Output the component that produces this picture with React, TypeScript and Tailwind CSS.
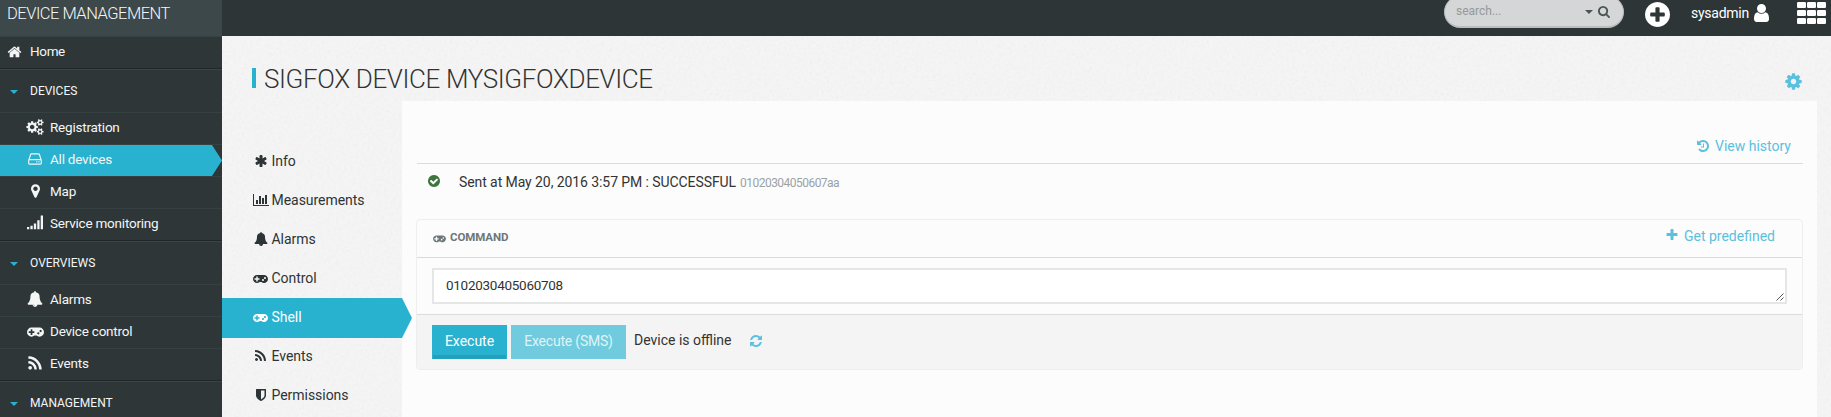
import type { ReactNode } from 'react';

const CIRCLE = 'M1664 896q0 209-103 385.5t-279.5 279.5-385.5 103-385.5-103-279.5-279.5-103-385.5 103-385.5 279.5-279.5 385.5-103 385.5 103 279.5 279.5 103 385.5z';
const TOOTHED = 'v140q0 16-149 31-12 27-30 52 51 113 51 138 0 4-4 7-122 71-124 71-8 0-46-47t-52-68q-20 2-30 2t-30-2q-14 21-52 68t-46 47q-2 0-124-71-4-3-4-7 0-25 51-138-18-25-30-52-149-15-149-31v-140q0-16 149-31 13-29 30-52-51-113-51-138 0-4 4-7 4-2 35-20t59-34 30-16q8 0 46 46.5t52 67.5q20-2 30-2t30 2q51-71 92-112l6-2q4 0 124 70 4 3 4 7 0 25-51 138 17 23 30 52 149 15 149 31z';

const icons = {
  home: ['0 0 1792 1792', 'M1472 992v480q0 26-19 45t-45 19h-384v-384h-256v384h-384q-26 0-45-19t-19-45v-480q0-1 .5-3t.5-3l575-474 575 474q1 2 1 6zm223-69l-62 74q-8 9-21 11h-3q-13 0-21-7l-692-577-692 577q-12 8-24 7-13-2-21-11l-62-74q-8-10-7-23.5t11-21.5l719-599q32-26 76-26t76 26l244 204v-195q0-14 9-23t23-9h192q14 0 23 9t9 23v408l219 182q10 8 11 21.5t-7 23.5z'],
  cogs: ['-64 0 1920 1792', 'M832 896q0-106-75-181t-181-75-181 75-75 181 75 181 181 75 181-75 75-181zm768 512q0-52-38-90t-90-38-90 38-38 90q0 53 37.5 90.5t90.5 37.5 90.5-37.5 37.5-90.5zm0-1024q0-52-38-90t-90-38-90 38-38 90q0 53 37.5 90.5t90.5 37.5 90.5-37.5 37.5-90.5zm-384 421v185q0 10-7 19.5t-16 10.5l-155 24q-11 35-32 76 34 48 90 115 7 11 7 20 0 12-7 19-23 30-82.5 89.5t-78.5 59.5q-11 0-21-7l-115-90q-37 19-77 31-11 108-23 155-7 24-30 24h-186q-11 0-20-7.5t-10-17.5l-23-153q-34-10-75-31l-118 89q-7 7-20 7-11 0-21-8-144-133-144-160 0-9 7-19 10-14 41-53t47-61q-23-44-35-82l-152-24q-10-1-17-9.5t-7-19.5v-185q0-10 7-19.5t16-10.5l155-24q11-35 32-76-34-48-90-115-7-11-7-20 0-12 7-20 22-30 82-89t79-59q11 0 21 7l115 90q34-18 77-32 11-108 23-154 7-24 30-24h186q11 0 20 7.5t10 17.5l23 153q34 10 75 31l118-89q8-7 20-7 11 0 21 8 144 133 144 160 0 8-7 19-12 16-42 54t-45 60q23 48 34 82l152 23q10 2 17 10.5t7 19.5zM1856 1338' + TOOTHED + 'M1856 314' + TOOTHED],
  hdd: ['128 0 1536 1792', 'M1168 1216q0 33-23.5 56.5t-56.5 23.5-56.5-23.5-23.5-56.5 23.5-56.5 56.5-23.5 56.5 23.5 23.5 56.5zm256 0q0 33-23.5 56.5t-56.5 23.5-56.5-23.5-23.5-56.5 23.5-56.5 56.5-23.5 56.5 23.5 23.5 56.5zm112 160v-320q0-13-9.5-22.5t-22.5-9.5h-1216q-13 0-22.5 9.5t-9.5 22.5v320q0 13 9.5 22.5t22.5 9.5h1216q13 0 22.5-9.5t9.5-22.5zm-1230-480h1180l-157-482q-4-13-16-21.5t-26-8.5h-782q-14 0-26 8.5t-16 21.5zm1358 160v320q0 66-47 113t-113 47h-1216q-66 0-113-47t-47-113v-320q0-25 16-75l197-606q17-53 63-86t101-33h782q55 0 101 33t63 86l197 606q16 50 16 75z'],
  marker: ['384 0 1024 1792', 'M1152 640q0-106-75-181t-181-75-181 75-75 181 75 181 181 75 181-75 75-181zm256 0q0 109-33 179l-364 774q-16 33-47.5 52t-67.5 19-67.5-19-46.5-52l-365-774q-33-70-33-179 0-212 150-362t362-150 362 150 150 362z'],
  signal: ['0 0 1792 1792', 'M0 1344h256v256h-256zM384 1216h256v384h-256zM768 960h256v640h-256zM1152 576h256v1024h-256zM1536 64h256v1536h-256z'],
  bell: ['0 0 1792 1792', 'M912 1696q0-16-16-16-59 0-101.5-42.5t-42.5-101.5q0-16-16-16t-16 16q0 73 51.5 124.5t124.5 51.5q16 0 16-16zm816-288q0 52-38 90t-90 38h-448q0 106-75 181t-181 75-181-75-75-181h-448q-52 0-90-38t-38-90q50-42 91-88t85-119.5 74.5-158.5 50-206 19.5-260q0-152 117-282.5t307-158.5q-8-19-8-39 0-40 28-68t68-28 68 28 28 68q0 20-8 39 190 28 307 158.5t117 282.5q0 139 19.5 260t50 206 74.5 158.5 85 119.5 91 88z'],
  gamepad: ['0 0 1920 1792', 'M832 1088v-128q0-14-9-23t-23-9h-192v-192q0-14-9-23t-23-9h-128q-14 0-23 9t-9 23v192h-192q-14 0-23 9t-9 23v128q0 14 9 23t23 9h192v192q0 14 9 23t23 9h128q14 0 23-9t9-23v-192h192q14 0 23-9t9-23zm576 64q0-53-37.5-90.5t-90.5-37.5-90.5 37.5-37.5 90.5 37.5 90.5 90.5 37.5 90.5-37.5 37.5-90.5zm256-256q0-53-37.5-90.5t-90.5-37.5-90.5 37.5-37.5 90.5 37.5 90.5 90.5 37.5 90.5-37.5 37.5-90.5zm256 128q0 212-150 362t-362 150q-192 0-338-128h-220q-146 128-338 128-212 0-362-150t-150-362 150-362 362-150h896q212 0 362 150t150 362z'],
  rss: ['192 0 1408 1792', 'M576 1344q0 80-56 136t-136 56-136-56-56-136 56-136 136-56 136 56 56 136zm512 123q2 28-17 48-18 21-47 21h-135q-25 0-43-16.5t-20-41.5q-22-229-184.5-391.5t-391.5-184.5q-25-2-41.5-20t-16.5-43v-135q0-29 21-47 17-17 43-17h5q160 13 306 80.5t259 181.5q114 113 181.5 259t80.5 306zm512 2q2 27-18 47-18 20-46 20h-143q-26 0-44.5-17.5t-19.5-42.5q-12-215-101-408.5t-231.5-336-336-231.5-408.5-102q-25-1-42.5-19.5t-17.5-43.5v-143q0-28 20-46 18-18 44-18h3q262 13 501.5 120t425.5 294q187 186 294 425.5t120 501.5z'],
  asterisk: ['0 0 1792 1792', 'M1546 1050q46 26 59.5 77.5t-12.5 97.5l-64 110q-26 46-77.5 59.5t-97.5-12.5l-266-153v307q0 52-38 90t-90 38h-128q-52 0-90-38t-38-90v-307l-266 153q-46 26-97.5 12.5t-77.5-59.5l-64-110q-26-46-12.5-97.5t59.5-77.5l266-154-266-154q-46-26-59.5-77.5t12.5-97.5l64-110q26-46 77.5-59.5t97.5 12.5l266 153v-307q0-52 38-90t90-38h128q52 0 90 38t38 90v307l266-153q46-26 97.5-12.5t77.5 59.5l64 110q26 46 12.5 97.5t-59.5 77.5l-266 154z'],
  chart: ['0 0 2048 1792', 'M640 896v512h-256v-512h256zm384-512v1024h-256v-1024h256zm1024 1152v128h-2048v-1536h128v1408h1920zm-640-896v768h-256v-768h256zm384-384v1152h-256v-1152h256z'],
  shield: ['256 0 1280 1792', 'M1344 960v-640h-448v1137q119-63 213-137 235-184 235-360zm192-768v768q0 86-33.5 170.5t-83 150-118 127.5-126.5 103-121 77.5-89.5 49.5-42.5 20q-12 6-26 6t-26-6q-16-7-42.5-20t-89.5-49.5-121-77.5-126.5-103-118-127.5-83-150-33.5-170.5v-768q0-26 19-45t45-19h1152q26 0 45 19t19 45z'],
  check: ['128 0 1536 1792', 'M1412 734q0-28-18-46l-91-90q-19-19-45-19t-45 19l-408 407-226-226q-19-19-45-19t-45 19l-91 90q-18 18-18 46 0 27 18 45l362 362q19 19 45 19 27 0 46-19l543-543q18-18 18-45z' + CIRCLE],
  history: ['128 0 1536 1792', 'M1664 896q0 156-61 298t-164 245-245 164-298 61q-172 0-327-72.5t-264-204.5q-7-10-6.5-22.5t8.5-20.5l137-138q10-9 25-9 16 2 23 12 73 95 179 147t225 52q104 0 198.5-40.5t163.5-109.5 109.5-163.5 40.5-198.5-40.5-198.5-109.5-163.5-163.5-109.5-198.5-40.5q-98 0-188 35.5t-160 101.5l137 138q31 30 14 69-17 40-59 40h-448q-26 0-45-19t-19-45v-448q0-42 40-59 39-17 69 14l130 129q107-101 244.5-156.5t284.5-55.5q156 0 298 61t245 164 164 245 61 298zm-640-288v448q0 14-9 23t-23 9h-320q-14 0-23-9t-9-23v-64q0-14 9-23t23-9h224v-352q0-14 9-23t23-9h64q14 0 23 9t9 23z'],
  plus: ['192 0 1408 1792', 'M1600 736v192q0 40-28 68t-68 28h-416v416q0 40-28 68t-68 28h-192q-40 0-68-28t-28-68v-416h-416q-40 0-68-28t-28-68v-192q0-40 28-68t68-28h416v-416q0-40 28-68t68-28h192q40 0 68 28t28 68v416h416q40 0 68 28t28 68z'],
  refresh: ['128 0 1536 1792', 'M1639 1056q0 5-1 7-64 268-268 434.5t-478 166.5q-146 0-282.5-55t-243.5-157l-129 129q-19 19-45 19t-45-19-19-45v-448q0-26 19-45t45-19h448q26 0 45 19t19 45-19 45l-137 137q71 66 161 102t187 36q134 0 250-65t186-179q11-17 53-117 8-23 30-23h192q13 0 22.5 9.5t9.5 22.5zm25-800v448q0 26-19 45t-45 19h-448q-26 0-45-19t-19-45 19-45l138-138q-148-137-349-137-134 0-250 65t-186 179q-11 17-53 117-8 23-30 23h-199q-13 0-22.5-9.5t-9.5-22.5v-7q65-268 270-434.5t480-166.5q146 0 284 55.5t245 156.5l130-129q19-19 45-19t45 19 19 45z'],
  cog: ['128 0 1536 1792', 'M1152 896q0-106-75-181t-181-75-181 75-75 181 75 181 181 75 181-75 75-181zm512-109v222q0 12-8 23t-20 13l-185 28q-19 54-39 91 35 50 107 138 10 12 10 25t-9 23q-27 37-99 108t-94 71q-12 0-26-9l-138-108q-44 23-91 38-16 136-29 186-7 28-36 28h-222q-14 0-24.5-8.5t-11.5-21.5l-28-184q-49-16-90-37l-141 107q-10 9-25 9-14 0-25-11-126-114-165-168-7-10-7-23 0-12 8-23 15-21 51-66.5t54-70.5q-27-50-41-99l-183-27q-13-2-21-12.5t-8-23.5v-222q0-12 8-23t19-13l186-28q14-46 39-92-40-57-107-138-10-12-10-24 0-10 9-23 26-36 98.5-107.5t94.5-71.5q13 0 26 10l138 107q44-23 91-38 16-136 29-186 7-28 36-28h222q14 0 24.5 8.5t11.5 21.5l28 184q49 16 90 37l142-107q9-9 24-9 13 0 25 10 129 119 165 170 7 8 7 22 0 12-8 23-15 21-51 66.5t-54 70.5q26 50 41 98l183 28q13 2 21 12.5t8 23.5z'],
  add: ['128 128 1536 1536', 'M1344 960v-128q0-26-19-45t-45-19h-256v-256q0-26-19-45t-45-19h-128q-26 0-45 19t-19 45v256h-256q-26 0-45 19t-19 45v128q0 26 19 45t45 19h256v256q0 26 19 45t45 19h128q26 0 45-19t19-45v-256h256q26 0 45-19t19-45z' + CIRCLE],
  user: ['256 128 1280 1536', 'M1536 1399q0 109-62.5 187t-150.5 78h-854q-88 0-150.5-78t-62.5-187q0-85 8.5-160.5t31.5-152 58.5-131 94-89 134.5-34.5q131 128 313 128t313-128q76 0 134.5 34.5t94 89 58.5 131 31.5 152 8.5 160.5zm-256-887q0 159-112.5 271.5t-271.5 112.5-271.5-112.5-112.5-271.5 112.5-271.5 271.5-112.5 271.5 112.5 112.5 271.5z'],
  search: ['64 128 1664 1664', 'M1216 832q0-185-131.5-316.5t-316.5-131.5-316.5 131.5-131.5 316.5 131.5 316.5 316.5 131.5 316.5-131.5 131.5-316.5zm512 832q0 52-38 90t-90 38q-54 0-90-38l-343-342q-179 124-399 124-143 0-273.5-55.5t-225-150-150-225-55.5-273.5 55.5-273.5 150-225 225-150 273.5-55.5 273.5 55.5 225 150 150 225 55.5 273.5q0 220-124 399l343 343q37 37 37 90z'],
  caret: ['0 0 8 4', 'M0 0h8l-4 4z'],
} as const;

type IconName = keyof typeof icons;

function Icon({ name, className = '' }: { name: IconName; className?: string }) {
  const [viewBox, d] = icons[name];
  return (
    <svg viewBox={viewBox} className={'shrink-0 fill-current ' + className} aria-hidden="true">
      <path d={d} fillRule={name === 'check' || name === 'add' ? 'evenodd' : 'nonzero'} />
    </svg>
  );
}

function GridIcon() {
  return (
    <svg viewBox="0 0 29 22" className="h-[22px] w-[29px] shrink-0 fill-white" aria-hidden="true">
      {[0, 8, 16].map((y) => [0, 10, 20].map((x) => <rect key={`${x}-${y}`} x={x} y={y} width="9" height="6" rx="1.2" />))}
    </svg>
  );
}

function Texture() {
  return (
    <svg className="absolute inset-0 h-full w-full opacity-[0.09]" aria-hidden="true">
      <filter id="paper">
        <feTurbulence type="fractalNoise" baseFrequency="0.35" numOctaves="3" stitchTiles="stitch" />
        <feColorMatrix type="saturate" values="0" />
      </filter>
      <rect width="100%" height="100%" filter="url(#paper)" />
    </svg>
  );
}

function Section({ children, className = '' }: { children: ReactNode; className?: string }) {
  return (
    <div className={'flex shrink-0 items-center border-t border-[#3a4548] pl-[10px] text-[12px] ' + className}>
      <Icon name="caret" className="mr-[12px] h-1 w-2 text-[#28b2cf]" />
      {children}
    </div>
  );
}

function SideItem({ icon, size, active, last, children }: { icon: IconName; size: string; active?: boolean; last?: boolean; children: ReactNode }) {
  return (
    <div className={'relative shrink-0 border-t border-[#364144] ' + (last ? 'h-[33px] border-b border-b-[#1f2628]' : 'h-8')}>
      <div className={'flex h-[31px] items-center pb-[2px] pl-[26px] ' + (active ? 'bg-[#28b2cf] [clip-path:polygon(0_0,212px_0,222px_50%,212px_100%,0_100%)]' : '')}>
        <span className="flex w-[18px] shrink-0 justify-center pb-[1px]"><Icon name={icon} className={size} /></span>
        <span className="ml-[6px] text-[13.5px] tracking-[-0.22px]">{children}</span>
      </div>
    </div>
  );
}

function NavItem({ icon, size, active, children }: { icon: IconName; size: string; active?: boolean; children: ReactNode }) {
  return (
    <div className={'flex w-[190px] items-center pl-[30px] ' + (active ? 'relative z-10 mt-px -mb-[2px] h-10 bg-[#28b2cf] pb-[2px] text-white [clip-path:polygon(0_0,180px_0,100%_50%,180px_100%,0_100%)]' : 'h-[39px] text-[#2d3436]')}>
      <span className="flex w-[17px] shrink-0 justify-center"><Icon name={icon} className={size} /></span>
      <span className="ml-[2.5px] text-sm tracking-[-0.04px]">{children}</span>
    </div>
  );
}

export default function App() {
  return (
    <div className="flex h-[417px] overflow-hidden font-['Roboto',sans-serif] text-sm whitespace-nowrap text-[#333]">
      <aside className="flex w-[222px] shrink-0 flex-col bg-[#2e3638] text-[#f4f6f6]">
        <div className="flex h-9 shrink-0 items-start bg-[#3d484a] pt-[1px] pl-[7px] text-[16.5px] leading-[25px] font-light tracking-[-0.5px]">DEVICE MANAGEMENT</div>
        <div className="flex h-[33px] shrink-0 items-center border-t border-b border-t-[#364144] border-b-[#1f2628] pb-[2px] pl-[7px]">
          <Icon name="home" className="h-[16px] w-[15px]" />
          <span className="ml-[8px] text-[13.5px] tracking-[-0.35px]">Home</span>
        </div>
        <Section className="h-[43px] pt-[2px]">DEVICES</Section>
        <SideItem icon="cogs" size="h-4 w-[18px]">Registration</SideItem>
        <SideItem icon="hdd" size="h-4 w-[14px]" active>All devices</SideItem>
        <SideItem icon="marker" size="h-4 w-[9px]">Map</SideItem>
        <SideItem icon="signal" size="h-4 w-4" last>Service monitoring</SideItem>
        <Section className="h-[43px] pt-[2px]">OVERVIEWS</Section>
        <SideItem icon="bell" size="h-4 w-4">Alarms</SideItem>
        <SideItem icon="gamepad" size="h-4 w-[17px]">Device control</SideItem>
        <SideItem icon="rss" size="h-[17px] w-[14px]" last>Events</SideItem>
        <Section className="h-[43px] pt-[1px]">MANAGEMENT</Section>
      </aside>

      <div className="flex min-w-0 flex-1 flex-col">
        <header className="flex h-9 shrink-0 items-start justify-end bg-[#2d3537] pr-[5px] text-white">
          <div className="-mt-1 flex h-8 w-[180px] items-center rounded-full border border-b-2 border-[#b9bdbf] bg-[#d4d6d8] pt-px pr-[13px] pl-[11px]">
            <span className="flex-1 text-[12px] text-[#94999b]">search...</span>
            <Icon name="caret" className="mr-[5px] h-1 w-2 text-[#4a5456]" />
            <Icon name="search" className="h-[12px] w-[12px] text-[#4a5456]" />
          </div>
          <Icon name="add" className="mt-[2px] ml-[21px] h-[25px] w-[25px]" />
          <span className="mt-[3px] ml-[21px] text-sm tracking-[-0.25px]">sysadmin</span>
          <Icon name="user" className="mt-[4px] ml-[5px] h-[18px] w-[15px]" />
          <span className="mt-[2px] ml-[28px]"><GridIcon /></span>
        </header>

        <main className="relative flex flex-1 flex-col bg-[#f6f6f6]">
          <Texture />
          <div className="relative flex h-[65px] shrink-0 items-center pr-[29px] pl-[30px]">
            <span className="mt-[19px] h-5 w-1 bg-[#28b2cf]" />
            <h1 className="mt-[20px] ml-[8px] text-[26px] leading-8 font-light tracking-[-0.37px]">SIGFOX DEVICE MYSIGFOXDEVICE</h1>
            <Icon name="cog" className="mt-[25px] ml-auto h-[19px] w-[17px] text-[#5bc0de]" />
          </div>

          <div className="relative flex flex-1">
            <nav className="relative z-10 mt-[40px] w-[180px] shrink-0">
              <NavItem icon="asterisk" size="h-[14px] w-[14px]">Info</NavItem>
              <NavItem icon="chart" size="h-[14px] w-4">Measurements</NavItem>
              <NavItem icon="bell" size="h-[14px] w-[14px]">Alarms</NavItem>
              <NavItem icon="gamepad" size="h-[14px] w-[15px]">Control</NavItem>
              <NavItem icon="gamepad" size="h-[14px] w-[15px]" active>Shell</NavItem>
              <NavItem icon="rss" size="h-[14px] w-[11px]">Events</NavItem>
              <NavItem icon="shield" size="h-[14px] w-[10px]">Permissions</NavItem>
            </nav>

            <section className="mr-[14px] flex-1 bg-[#fcfcfc] pr-[14px] pl-[14px]">
              <div className="ml-px flex h-[63px] items-end justify-end border-b border-[#dadcdc] pr-[12px] pb-[7px] text-[#5bc0de]">
                <Icon name="history" className="mb-[3px] h-[14px] w-3" />
                <span className="ml-[6px]">View history</span>
              </div>
              <div className="flex h-[55px] items-start pt-[8px] pl-3">
                <Icon name="check" className="mt-[2px] h-[14px] w-3 text-[#3c763d]" />
                <span className="ml-[19px] tracking-[-0.08px]">Sent at May 20, 2016 3:57 PM : SUCCESSFUL</span>
                <span className="ml-[4px] pt-px text-[12px] leading-5 tracking-[-0.53px] text-[#9aa3a5]">01020304050607aa</span>
              </div>

              <div className="overflow-hidden rounded-[4px] border border-[#eeeeee]">
                <div className="flex h-[38px] items-center border-b border-[#dadcdc] pr-[27px] pl-4">
                  <Icon name="gamepad" className="mb-[2px] h-3 w-[13px] text-[#6d7678]" />
                  <span className="mb-[2px] ml-1 text-[11.5px] font-bold tracking-[-0.1px] text-[#6d7678]">COMMAND</span>
                  <Icon name="plus" className="mb-[7px] ml-auto h-[14px] w-3 text-[#5bc0de]" />
                  <span className="mb-[6px] ml-[6px] text-[#5bc0de]">Get predefined</span>
                </div>
                <div className="px-[15px] pt-[10px] pb-[10px]">
                  <div className="relative h-9 border-2 border-[#e5e6e6] bg-white pt-[5px] pl-3 text-[13.5px] leading-[21px] tracking-[-0.28px]">
                    0102030405060708
                    <svg viewBox="0 0 8 8" className="absolute right-px bottom-px h-2 w-2 fill-none stroke-[#555]" aria-hidden="true">
                      <path d="M0.5 7.5l7-7M4.5 7.5l3-3" />
                    </svg>
                  </div>
                </div>
                <div className="flex h-[55px] border-t border-[#dadcdc] bg-[#f4f4f4] pt-[10px] pl-[15px]">
                  <button className="h-[34px] w-[75px] border border-b-0 border-[#28b2cf] bg-[#28b2cf] pb-[4px] text-white shadow-[inset_0_-4px_0_#22a1bc]">Execute</button>
                  <button className="ml-1 h-[34px] w-[115px] bg-[#70cbde] pb-[2px] tracking-[-0.2px] text-[#dff4f8]">Execute (SMS)</button>
                  <span className="mt-[5px] ml-[8px]">Device is offline</span>
                  <Icon name="refresh" className="mt-[9px] ml-[18px] h-[14px] w-3 text-[#5bc0de]" />
                </div>
              </div>
            </section>
          </div>
        </main>
      </div>
    </div>
  );
}
